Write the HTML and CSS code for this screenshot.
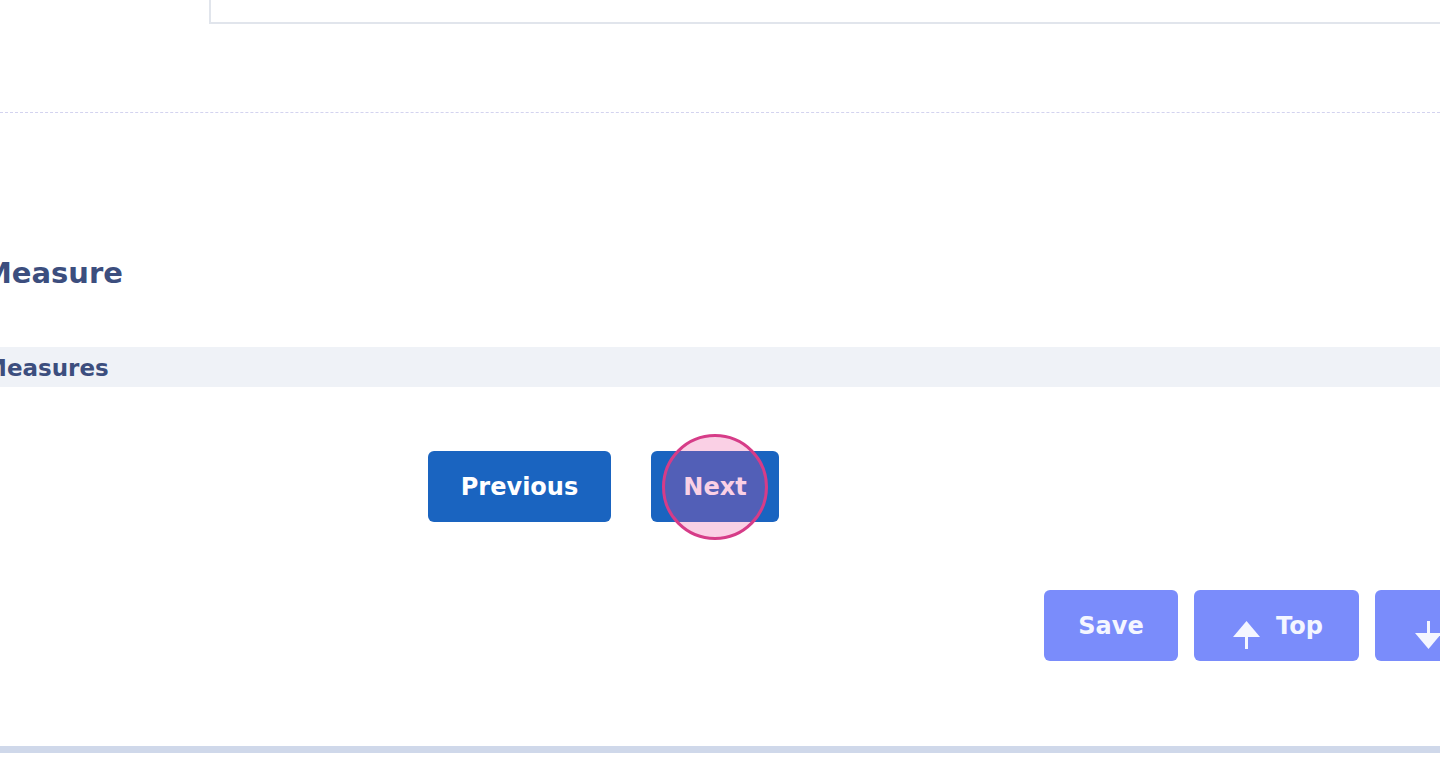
FILE: index.html
```html
<!DOCTYPE html>
<html lang="en">
<head>
<meta charset="utf-8">
<title>Measure</title>
<link rel="stylesheet" href="styles.css">
</head>
<body>
<div class="page">
  <div class="top-box"></div>
  <div class="divider"></div>
  <section class="section">
    <h2 class="section-title">Measure</h2>
    <div class="sub-bar"><span class="sub-title">Measures</span></div>
    <div class="pager">
      <button class="btn btn-primary btn-prev">Previous</button>
      <div class="highlight-wrap">
        <button class="btn btn-primary btn-next">Next</button>
        <span class="click-ring"></span>
      </div>
    </div>
    <div class="actions">
      <button class="btn btn-action btn-save">Save</button>
      <button class="btn btn-action btn-icon btn-top">
        <svg class="arrow" width="27" height="28" viewBox="0 0 27 28"><path d="M0 16 L13.5 0 L27 16 Z" fill="#f4f6ff"/><rect x="12" y="14" width="3" height="14" fill="#f4f6ff"/></svg>
        <span>Top</span>
      </button>
      <button class="btn btn-action btn-icon btn-down">
        <svg class="arrow" width="27" height="28" viewBox="0 0 27 28"><rect x="12" y="0" width="3" height="14" fill="#f4f6ff"/><path d="M0 12 L13.5 28 L27 12 Z" fill="#f4f6ff"/></svg>
        <span>Bottom</span>
      </button>
    </div>
  </section>
  <div class="bottom-bar"></div>
</div>
</body>
</html>
```
FILE: styles.css
```css
html, body {
  margin: 0;
  padding: 0;
  background: #ffffff;
  overflow: hidden;
}
body {
  width: 1440px;
  height: 760px;
  font-family: "DejaVu Sans", "Open Sans", sans-serif;
  color: #3c4e7e;
}
.page {
  display: flex;
  flex-direction: column;
  width: 1440px;
  overflow: hidden;
}
.top-box {
  margin-left: 209px;
  width: 1300px;
  height: 22px;
  border: 2px solid #e1e5ec;
  border-top: none;
  box-sizing: content-box;
}
.divider {
  margin-top: 88px;
  height: 0;
  border-top: 1px dashed #d3d3ef;
}
.section {
  display: flex;
  flex-direction: column;
}
.section-title {
  margin: 138px 0 0 -17px;
  font-size: 29px;
  font-weight: 700;
  line-height: 44px;
  color: #3c4e7e;
  white-space: nowrap;
}
.sub-bar {
  margin-top: 52px;
  height: 40px;
  background: #eff2f7;
  display: flex;
  align-items: center;
  padding-top: 1px;
  box-sizing: border-box;
}
.sub-title {
  margin-left: -16px;
  font-size: 23px;
  font-weight: 700;
  color: #3c4e7e;
  white-space: nowrap;
}
.pager {
  display: flex;
  gap: 40px;
  margin: 64px 0 0 428px;
  align-items: center;
}
.btn {
  border: none;
  font-family: "DejaVu Sans", "Open Sans", sans-serif;
  font-weight: 700;
  font-size: 24px;
  color: #ffffff;
  border-radius: 6px;
  height: 71px;
  display: inline-flex;
  align-items: center;
  justify-content: center;
  padding: 0;
  box-sizing: border-box;
  cursor: pointer;
  white-space: nowrap;
}
.btn-primary {
  background: #1a64c0;
}
.btn-prev {
  width: 183px;
}
.btn-next {
  width: 128px;
}
.highlight-wrap {
  position: relative;
  display: flex;
}
.click-ring {
  position: absolute;
  left: 11px;
  top: -17px;
  width: 100px;
  height: 100px;
  border: 3px solid #d63c88;
  border-radius: 50%;
  background: rgba(236, 80, 160, 0.27);
  pointer-events: none;
}
.actions {
  display: flex;
  gap: 16px;
  margin: 68px 0 0 1044px;
  width: 600px;
}
.btn-action {
  background: #7a8cfb;
  color: #f4f6ff;
  flex: none;
}
.btn-save {
  width: 134px;
}
.btn-icon {
  justify-content: flex-start;
  gap: 16px;
  padding-left: 39px;
}
.btn-top {
  width: 165px;
}
.btn-down {
  width: 200px;
  padding-left: 40px;
}
.arrow {
  align-self: flex-end;
  margin-bottom: 12px;
  flex: none;
}
.bottom-bar {
  margin-top: 85px;
  height: 7px;
  background: #cfd8ea;
}
```
